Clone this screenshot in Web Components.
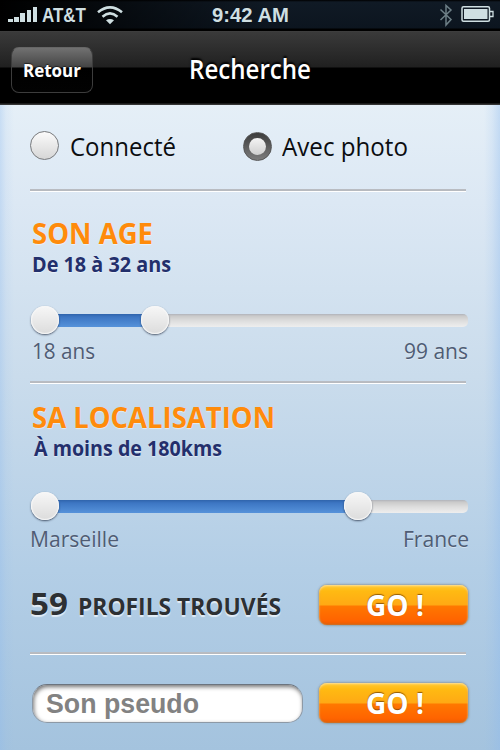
<!DOCTYPE html>
<html lang="fr">
<head>
<meta charset="utf-8">
<title>Recherche</title>
<style>
  html, body {
    margin: 0;
    height: 100%;
    overflow: hidden;
  }
  body {
    font-family: "Open Sans", "Noto Sans", sans-serif;
    background: #a4c3de;
  }
</style>
</head>
<body>
<search-app>
  <status-bar slot="top" carrier="AT&amp;T" time="9:42 AM"></status-bar>
  <nav-bar slot="top" back="Retour" back-width="58" width="122">Recherche</nav-bar>

  <div style="display:flex;gap:67px;height:30px">
    <radio-option width="106">Connecté</radio-option>
    <radio-option width="126" checked>Avec photo</radio-option>
  </div>
  <rule-line style="margin-top:28px"></rule-line>

  <range-block heading="SON AGE" heading-width="121" detail="De 18 à 32 ans" detail-width="139"
    from="18 ans" from-width="63" to="99 ans" to-width="64" end="110" style="margin-top:25px"></range-block>
  <rule-line style="margin-top:17px"></rule-line>

  <range-block heading="SA LOCALISATION" heading-width="243" detail="À moins de 180kms" detail-width="188"
    from="Marseille" from-width="89" to="France" to-width="66" end="313" gap="32" label-gap="6"
    class="place" style="margin-top:17px"></range-block>

  <div style="display:flex;justify-content:space-between;height:40px;margin-top:33px;width:438px">
    <result-count count="59">PROFILS TROUVÉS</result-count>
    <go-button>GO !</go-button>
  </div>
  <rule-line style="margin-top:27px"></rule-line>

  <div style="display:flex;justify-content:space-between;margin-top:28px;width:438px">
    <pseudo-field>Son pseudo</pseudo-field>
    <go-button>GO !</go-button>
  </div>
</search-app>

<script>
(function () {
    function attach(host, html) {
        const tmpl = document.createElement("template");
        tmpl.innerHTML = html;
        const root = host.attachShadow({ mode: "open" });
        root.appendChild(tmpl.content.cloneNode(true));
        return root;
    }

    class SearchApp extends HTMLElement {
        constructor() {
            super();
            attach(this, `
              <style>
                :host {
                  display: flex;
                  flex-direction: column;
                  width: 500px;
                  height: 750px;
                }
                main {
                  flex: 1;
                  box-sizing: border-box;
                  padding: 26px 30px 0;
                  background:
                    linear-gradient(to right, rgba(140,185,238,.32), rgba(140,185,238,.1) 6px, transparent 14px),
                    linear-gradient(to left, rgba(140,185,238,.38), rgba(140,185,238,.14) 8px, transparent 16px),
                    linear-gradient(#e5eff7 0%, #dce8f4 15%, #cadcec 42%, #b3cee6 72%, #a4c3de 100%);
                }
              </style>
              <slot name="top"></slot>
              <main><slot></slot></main>
            `);
        }
    }

    class StatusBar extends HTMLElement {
        constructor() {
            super();
            const root = attach(this, `
              <style>
                :host {
                  display: grid;
                  grid-template-columns: 1fr auto 1fr;
                  align-items: center;
                  height: 31px;
                  box-sizing: border-box;
                  padding: 0 6px 1px 8px;
                  color: #cfdfe2;
                  font: bold 20px/28px "Liberation Sans", Arial, sans-serif;
                  background: linear-gradient(to right, #000, rgba(0,0,0,0) 55%),
                    linear-gradient(#000 0, #101a25 2px, #0c151f 28px, #000 29px);
                }
                div { display: flex; align-items: center; }
                .right { justify-content: flex-end; }
                svg { display: block; }
              </style>
              <div>
                <svg width="30" height="30" fill="#cfdfe2">
                  <rect x="0" y="19" width="5" height="3"/>
                  <rect x="6" y="17" width="5" height="5"/>
                  <rect x="12" y="13" width="5" height="9"/>
                  <rect x="19" y="10" width="4" height="12"/>
                  <rect x="25" y="7" width="4" height="15"/>
                </svg>
                <fit-text width="44" style="margin-left:4px" id="carrier"></fit-text>
                <svg width="26" height="30" viewBox="0 0 26 30" fill="none" stroke="#cfdfe2" stroke-width="2.6" style="margin-left:11px">
                  <path d="M1 12.3Q13 2.5 25 12.3"/>
                  <path d="M5.5 16.7Q13 10.2 20.5 16.7"/>
                  <path d="M9 20.3Q13 17.6 17 20.3L13 24.2Z" fill="#cfdfe2" stroke="none"/>
                </svg>
              </div>
              <fit-text width="77" id="time" style="margin-left:-2px"></fit-text>
              <div class="right">
                <svg width="14" height="30" fill="none" stroke="#6d7f86" stroke-width="1.5">
                  <path d="M1.5 9.5L12 19.5L7 25V5.5L12 10L1.5 20"/>
                </svg>
                <svg width="33" height="30" style="margin-left:8px">
                  <rect x="1" y="6.8" width="27.5" height="14.5" rx="1.5" fill="none" stroke="#cfdfe2" stroke-width="1.5"/>
                  <rect x="3" y="9" width="23.5" height="10" fill="#cfdfe2"/>
                  <path d="M29 11.5H32V16.5H29" fill="none" stroke="#cfdfe2" stroke-width="1.3"/>
                </svg>
              </div>
            `);
            root.getElementById("carrier").textContent = this.getAttribute("carrier");
            root.getElementById("time").textContent = this.getAttribute("time");
        }
    }

    class NavBar extends HTMLElement {
        constructor() {
            super();
            const root = attach(this, `
              <style>
                :host {
                  display: grid;
                  grid-template-columns: 94px 1fr 94px;
                  height: 74px;
                  box-sizing: border-box;
                  padding-top: 16px;
                  color: #fff;
                  background: linear-gradient(#414141 0, #3a3a3a 1px, #202020 36px, #000 37px, #000 72px, #343434 73px, #343434 74px);
                }
                button {
                  width: 82px;
                  height: 46px;
                  margin: 0 0 0 11px;
                  padding: 0;
                  border: 1.5px solid #3c3c3c;
                  border-top-color: #666;
                  border-radius: 8px;
                  color: #fff;
                  font: bold 17.5px/43px "Open Sans", sans-serif;
                  text-shadow: 0 -1px 1px #222;
                  background: linear-gradient(#717171, #454545 19px, #000 20px, #020202);
                }
                h1 {
                  margin: 0;
                  text-align: center;
                  font-size: 27.5px;
                  font-weight: 600;
                  line-height: 44px;
                  text-shadow: 0 -2px 2px #000;
                }
              </style>
              <button><fit-text id="back"></fit-text></button>
              <h1><fit-text id="title"><slot></slot></fit-text></h1>
            `);
            const back = root.getElementById("back");
            back.textContent = this.getAttribute("back");
            back.setAttribute("width", this.getAttribute("back-width"));
            root.getElementById("title").setAttribute("width", this.getAttribute("width"));
        }
    }

    class RadioOption extends HTMLElement {
        constructor() {
            super();
            const root = attach(this, `
              <style>
                :host {
                  display: flex;
                  gap: 10.5px;
                  color: #0b0d10;
                  font-size: 25px;
                  line-height: 30px;
                }
                i {
                  box-sizing: border-box;
                  width: 29px;
                  height: 29px;
                  border: 1px solid #77797c;
                  border-radius: 50%;
                  background: linear-gradient(#fbfbfb, #d6d6d6);
                }
                :host([checked]) i {
                  display: grid;
                  place-items: center;
                  margin-top: 1px;
                  border-color: #555;
                  background: linear-gradient(#3c3c3c, #7d7d7d);
                }
                :host([checked]) i::after {
                  content: "";
                  width: 17px;
                  height: 17px;
                  border-radius: 50%;
                  background: linear-gradient(#f4f4f4, #cfcfcf);
                }
              </style>
              <i></i><fit-text><slot></slot></fit-text>
            `);
            root.querySelector("fit-text").setAttribute("width", this.getAttribute("width"));
        }
    }

    class RuleLine extends HTMLElement {
        constructor() {
            super();
            attach(this, `
              <style>
                :host {
                  display: block;
                  width: 436px;
                  height: 3px;
                  background: linear-gradient(#babdc3 0, #b7babf 1.5px, #fff 2px, #fff 3px);
                }
              </style>
            `);
        }
    }

    class RangeBlock extends HTMLElement {
        constructor() {
            super();
            const root = attach(this, `
              <style>
                :host { display: block; }
                h2, p { margin: 0; }
                h2 {
                  padding-left: 2px;
                  color: #ff8b0b;
                  font-size: 28px;
                  font-weight: 700;
                  line-height: 32px;
                  text-shadow: 0 1px 1px rgba(255,255,255,.5);
                }
                p {
                  margin-top: 3px;
                  padding-left: 1.5px;
                  color: #232f6c;
                  font-size: 20.5px;
                  font-weight: 700;
                  line-height: 25px;
                  text-shadow: 0 1px 1px rgba(255,255,255,.5);
                }
                :host(.place) p { padding-left: 4px; }
                .slider {
                  display: grid;
                  grid-template-columns: 1px 28px 1fr 28px;
                  align-items: center;
                  height: 28px;
                }
                .track {
                  grid-area: 1 / 2 / 2 / 5;
                  height: 13px;
                  border-radius: 5px;
                  background: linear-gradient(#b0b3ba 0, #cacaca 2px, #dedede 7px, #eee);
                }
                .fill {
                  grid-area: 1 / 2;
                  height: 13px;
                  margin-left: 10px;
                  background: linear-gradient(#2f64ac 0, #3d76c3 3px, #5692da);
                }
                b {
                  grid-area: 1 / 2;
                  width: 28px;
                  height: 28px;
                  border-radius: 50%;
                  background: linear-gradient(#f7f7f7, #dcdcdc);
                  box-shadow: inset 0 0 1px 1px #f7f7f7, 0 1px 2px rgba(20,30,50,.7);
                }
                .labels {
                  display: flex;
                  justify-content: space-between;
                  padding-left: 1.5px;
                  color: #4f5c74;
                  font-size: 21px;
                  line-height: 27px;
                  text-shadow: 0 1px 0 rgba(255,255,255,.4);
                }
                .labels, .slider { box-sizing: border-box; width: 438px; }
                :host(.place) .labels { width: 439px; padding-left: 0; }
              </style>
              <h2><fit-text id="heading"></fit-text></h2>
              <p><fit-text id="detail"></fit-text></p>
              <div class="slider">
                <span class="track"></span><span class="fill"></span><b></b><b class="end"></b>
              </div>
              <div class="labels"><fit-text id="from"></fit-text><fit-text id="to"></fit-text></div>
            `);
            for (let name of ["heading", "detail", "from", "to"]) {
                const el = root.getElementById(name);
                el.textContent = this.getAttribute(name);
                el.setAttribute("width", this.getAttribute(name + "-width"));
            }
            const end = Number(this.getAttribute("end"));
            root.querySelector(".end").style.marginLeft = end + "px";
            root.querySelector(".fill").style.width = end + "px";
            root.querySelector(".slider").style.marginTop = (this.getAttribute("gap") || 30) - 1 + "px";
            root.querySelector(".labels").style.marginTop = (this.getAttribute("label-gap") || 4) + "px";
            root.querySelector(".labels").style.marginBottom = "-1px";
        }
    }

    class ResultCount extends HTMLElement {
        constructor() {
            super();
            const root = attach(this, `
              <style>
                :host {
                  display: flex;
                  align-items: baseline;
                  gap: 10px;
                  color: #2d3033;
                  font-size: 23px;
                  font-weight: 700;
                  line-height: 37px;
                  text-shadow: 0 1.5px 1px rgba(255,255,255,.65);
                }
                #count { font-size: 31px; }
              </style>
              <fit-text id="count" width="38"></fit-text>
              <fit-text width="203"><slot></slot></fit-text>
            `);
            root.getElementById("count").textContent = this.getAttribute("count");
        }
    }

    class GoButton extends HTMLElement {
        constructor() {
            super();
            attach(this, `
              <style>
                :host { display: block; }
                button {
                  display: block;
                  width: 149px;
                  height: 40px;
                  padding: 0 0 0 3px;
                  border: 0;
                  border-radius: 8px;
                  color: #fff;
                  font: bold 28px/40px "Open Sans", sans-serif;
                  text-shadow: 0 -1px 1px rgba(110,60,0,.75);
                  background: linear-gradient(#ffc935, #ffba12 6px, #ffa914 20px, #ff7800 21px, #ff6400 35px, #f25c00);
                  box-shadow: inset 0 1px 2px #ffe29a, inset 0 -1px 2px #c66a20, 0 0 2px 1px rgba(115,110,90,.45);
                }
              </style>
              <button><fit-text width="58"><slot></slot></fit-text></button>
            `);
        }
    }

    class PseudoField extends HTMLElement {
        constructor() {
            super();
            attach(this, `
              <style>
                :host {
                  display: block;
                  box-sizing: border-box;
                  width: 271px;
                  height: 39px;
                  margin: 1px 0 0 2px;
                  padding-left: 13px;
                  border: 1px solid #8d99a6;
                  border-top-color: #6c747e;
                  border-radius: 15px;
                  color: #828282;
                  font: bold 27px/38px "Liberation Sans", Arial, sans-serif;
                  background: #fff;
                  box-shadow: inset 1px 2px 4px rgba(0,0,0,.55);
                }
              </style>
              <fit-text width="153"><slot></slot></fit-text>
            `);
        }
    }

    // One line of text squeezed or stretched to the given advance width
    class FitText extends HTMLElement {
        constructor() {
            super();
            attach(this, `
              <style>
                :host { display: inline-block; white-space: nowrap; text-align: left; }
                span { display: inline-block; transform-origin: 0 50%; }
              </style>
              <span><slot></slot></span>
            `);
        }

        connectedCallback() {
            const width = Number(this.getAttribute("width"));
            const span = this.shadowRoot.querySelector("span");
            const natural = span.getBoundingClientRect().width;
            if (!width || !natural) {
                return;
            }
            this.style.width = width + "px";
            span.style.transform = "scaleX(" + width / natural + ")";
        }
    }

    customElements.define("search-app", SearchApp);
    customElements.define("status-bar", StatusBar);
    customElements.define("nav-bar", NavBar);
    customElements.define("radio-option", RadioOption);
    customElements.define("rule-line", RuleLine);
    customElements.define("range-block", RangeBlock);
    customElements.define("result-count", ResultCount);
    customElements.define("go-button", GoButton);
    customElements.define("pseudo-field", PseudoField);
    // last, so every surrounding font is already in effect when it measures
    customElements.define("fit-text", FitText);
})();
</script>
</body>
</html>
